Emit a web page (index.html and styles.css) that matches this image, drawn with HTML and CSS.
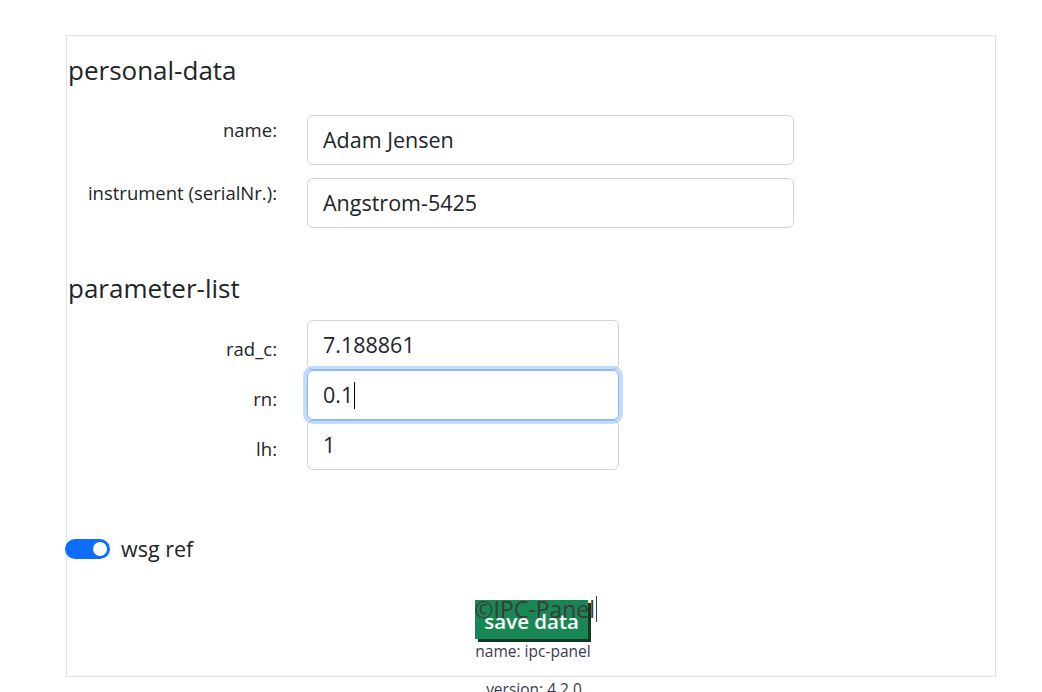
FILE: index.html
```html
<!DOCTYPE html>
<html lang="en">
<head>
<meta charset="utf-8">
<title>ipc-panel</title>
<link rel="stylesheet" href="styles.css">
</head>
<body>
<div class="panel">
  <h4 class="section-title first">personal-data</h4>
  <div class="field-row">
    <label class="field-label">name:</label>
    <div class="field-input wide">Adam Jensen</div>
  </div>
  <div class="field-row second">
    <label class="field-label">instrument (serialNr.):</label>
    <div class="field-input wide">Angstrom-5425</div>
  </div>

  <h4 class="section-title params">parameter-list</h4>
  <div class="param-list">
    <div class="param-row">
      <label class="param-label">rad_c:</label>
      <div class="field-input narrow">7.188861</div>
    </div>
    <div class="param-row">
      <label class="param-label">rn:</label>
      <div class="field-input narrow focused">0.1<span class="caret"></span></div>
    </div>
    <div class="param-row">
      <label class="param-label">lh:</label>
      <div class="field-input narrow">1</div>
    </div>
  </div>

  <div class="switch-row">
    <span class="switch"><span class="knob"></span></span>
    <span class="switch-label">wsg ref</span>
  </div>

  <div class="footer">
    <div class="footer-stack">
      <span class="copyright">©IPC-Panel</span>
      <button class="btn-save"><span class="btn-text">save data</span></button>
      <div class="app-name">name: ipc-panel</div>
    </div>
  </div>
</div>
<div class="version">version: 4.2.0</div>
</body>
</html>
```

FILE: styles.css
```css
* { box-sizing: border-box; }
html, body { margin: 0; padding: 0; background: #fff; }
body {
  font-family: "Open Sans", "Noto Sans", sans-serif;
  color: #212529;
  height: 692px;
  overflow: hidden;
}
.panel {
  margin: 35px 0 0 66px;
  width: 930px;
  height: 642px;
  border: 1px solid #dee2e6;
  display: flex;
  flex-direction: column;
}
.section-title {
  margin: 0;
  font-size: 26px;
  font-weight: 400;
  line-height: 30px;
  padding-left: 1px;
}
.section-title.first { margin-top: 19px; }
.section-title.params { margin-top: 45px; }

.field-row {
  display: flex;
  align-items: flex-start;
  margin-top: 30px;
}
.field-row.second { margin-top: 13px; }
.field-label {
  width: 210px;
  text-align: right;
  font-size: 18.5px;
  line-height: 24px;
  padding-top: 3px;
  margin-right: 30px;
}
.field-input {
  height: 50px;
  border: 1px solid #ced4da;
  border-radius: 6px;
  padding: 0 15px;
  font-size: 21.5px;
  line-height: 48px;
  background: #fff;
  color: #212529;
}
.field-input.wide { width: 487px; }
.field-input.narrow { width: 312px; }
.field-input.focused {
  border-color: #86b7fe;
  box-shadow: 0 0 0 4px rgba(13, 110, 253, 0.25);
  position: relative;
  z-index: 1;
}
.caret {
  display: inline-block;
  width: 1px;
  height: 27px;
  background: #000;
  vertical-align: -6px;
  margin-left: 1px;
}

.param-list {
  margin-top: 17px;
  display: flex;
  flex-direction: column;
}
.param-row {
  display: flex;
  align-items: center;
  height: 50px;
}
.param-label {
  width: 210px;
  text-align: right;
  font-size: 18.5px;
  line-height: 24px;
  padding-top: 7px;
  margin-right: 30px;
}

.switch-row {
  display: flex;
  align-items: center;
  margin-top: 64px;
  margin-left: -2px;
}
.switch {
  width: 45px;
  height: 20px;
  border-radius: 10px;
  background: #0d6efd;
  display: flex;
  align-items: center;
  justify-content: flex-end;
  padding-right: 3px;
}
.knob {
  width: 14px;
  height: 14px;
  border-radius: 50%;
  background: #fff;
}
.switch-label {
  margin-left: 11px;
  font-size: 21.5px;
  line-height: 30px;
}

.footer {
  display: flex;
  justify-content: center;
  margin-top: 36px;
  padding-left: 4px;
}
.footer-stack {
  position: relative;
  display: flex;
  flex-direction: column;
  align-items: flex-start;
}
.copyright {
  position: absolute;
  left: -1px;
  top: -4px;
  z-index: 1;
  font-size: 23px;
  line-height: 26px;
  color: #3b3b3b;
  white-space: nowrap;
  padding-right: 1px;
  border-right: 1px solid #4a2a6a;
}
.btn-save {
  border: none;
  background: #198754;
  box-shadow: 3px 3px 0 #0d3a25;
  padding: 3px 9px 0;
  height: 39px;
  font-family: inherit;
  font-size: 20.5px;
  font-weight: 600;
  color: #fff;
  line-height: 36px;
  margin: 0;
  border-radius: 0;
}
.btn-text { position: relative; z-index: 2; }
.app-name {
  margin-top: 2px;
  font-size: 15.5px;
  line-height: 20px;
  color: #3a3a4e;
}
.version {
  text-align: center;
  margin-left: 66px;
  width: 930px;
  padding-left: 6px;
  margin-top: 1px;
  font-size: 15.5px;
  line-height: 22px;
  color: #3a3a4e;
}
```
